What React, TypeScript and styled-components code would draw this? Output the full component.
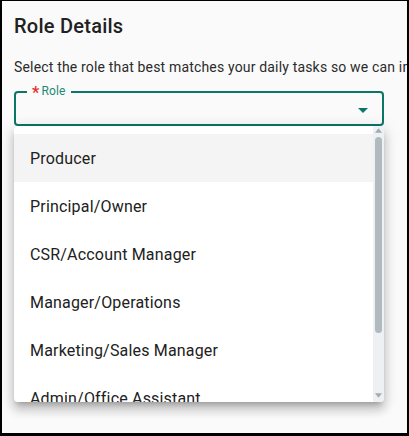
import styled, { createGlobalStyle } from "styled-components";

const roles = [
  "Producer",
  "Principal/Owner",
  "CSR/Account Manager",
  "Manager/Operations",
  "Marketing/Sales Manager",
  "Admin/Office Assistant",
];

const GlobalStyle = createGlobalStyle`
  html, body {
    margin: 0;
    padding: 0;
    background: #000000;
  }
  * {
    box-sizing: border-box;
  }
`;

export default function App() {
  return (
    <>
      <GlobalStyle />
      <Frame>
        <Title>Role Details</Title>
        <Subtitle>Select the role that best matches your daily tasks so we can improve your experience.</Subtitle>
        <SelectWrap>
          <SelectBox>
            <FieldLabel>
              <Required>*</Required>Role
            </FieldLabel>
            <ArrowIcon viewBox="0 0 10 5" aria-hidden>
              <path d="M0 0 L10 0 L5 5 Z" fill="#0b7666" />
            </ArrowIcon>
          </SelectBox>
          <Menu role="listbox">
            <MenuList>
              {roles.map((role, index) => (
                <MenuItem key={role} $active={index === 0}>
                  {role}
                </MenuItem>
              ))}
            </MenuList>
            <Scrollbar>
              <ScrollArrow viewBox="0 0 8 5" aria-hidden>
                <path d="M4 0 L8 5 L0 5 Z" fill="#a3abaf" />
              </ScrollArrow>
              <ScrollTrack>
                <ScrollThumb />
              </ScrollTrack>
              <ScrollArrow viewBox="0 0 8 5" aria-hidden>
                <path d="M0 0 L8 0 L4 5 Z" fill="#a3abaf" />
              </ScrollArrow>
            </Scrollbar>
          </Menu>
        </SelectWrap>
      </Frame>
    </>
  );
}

const Frame = styled.div`
  width: 409px;
  height: 436px;
  border-style: solid;
  border-color: #000000;
  border-width: 1px 2px 3px 2px;
  background: #fafafa;
  padding: 13px 0 0 12px;
  font-family: Roboto, "Liberation Sans", sans-serif;
  overflow: hidden;
`;

const Title = styled.h2`
  margin: 0;
  font-size: 20px;
  line-height: 24px;
  font-weight: 500;
  letter-spacing: 0.25px;
  color: #212121;
`;

const Subtitle = styled.p`
  margin: 19px 0 0;
  font-size: 14px;
  line-height: 20px;
  letter-spacing: 0.17px;
  color: #2b2b2b;
  white-space: nowrap;
`;

const SelectWrap = styled.div`
  position: relative;
  width: 370px;
  margin-top: 14px;
`;

const SelectBox = styled.div`
  position: relative;
  height: 35px;
  border: 2px solid #0b7666;
  border-radius: 4px;
  display: flex;
  align-items: center;
  justify-content: flex-end;
  padding-right: 14px;
`;

const FieldLabel = styled.span`
  position: absolute;
  top: -9px;
  left: 11px;
  padding: 0 5px;
  background: #fafafa;
  font-size: 12px;
  line-height: 14px;
  letter-spacing: 0.15px;
  color: #1a8a78;
`;

const Required = styled.span`
  color: #e0312f;
  font-size: 16px;
  font-weight: 700;
  margin-right: 2px;
  vertical-align: -3px;
`;

const ArrowIcon = styled.svg`
  width: 10px;
  height: 5px;
  margin-top: 3px;
`;

const Menu = styled.div`
  position: absolute;
  top: 100%;
  left: 0;
  width: 370px;
  height: 276px;
  background: #ffffff;
  border-radius: 4px;
  display: flex;
  overflow: hidden;
  box-shadow:
    0 5px 5px -3px rgba(0, 0, 0, 0.2),
    0 8px 10px 1px rgba(0, 0, 0, 0.14),
    0 3px 14px 2px rgba(0, 0, 0, 0.12);
`;

const MenuList = styled.ul`
  flex: 1;
  list-style: none;
  margin: 0;
  padding: 8px 0 0;
  overflow: hidden;
`;

const MenuItem = styled.li<{ $active?: boolean }>`
  height: 48px;
  display: flex;
  align-items: center;
  padding-left: 16px;
  font-size: 16px;
  letter-spacing: 0.18px;
  color: #212121;
  background: ${({ $active }) => ($active ? "#f4f4f4" : "transparent")};
  white-space: nowrap;
`;

const Scrollbar = styled.div`
  width: 11px;
  background: #eef1f3;
  display: flex;
  flex-direction: column;
  align-items: center;
  padding: 2px 0 4px;
`;

const ScrollArrow = styled.svg`
  width: 7px;
  height: 5px;
  flex: none;
`;

const ScrollTrack = styled.div`
  flex: 1;
  width: 100%;
  padding: 4px 2px 0;
`;

const ScrollThumb = styled.div`
  width: 100%;
  height: 196px;
  border-radius: 4px;
  background: #b1babf;
`;
